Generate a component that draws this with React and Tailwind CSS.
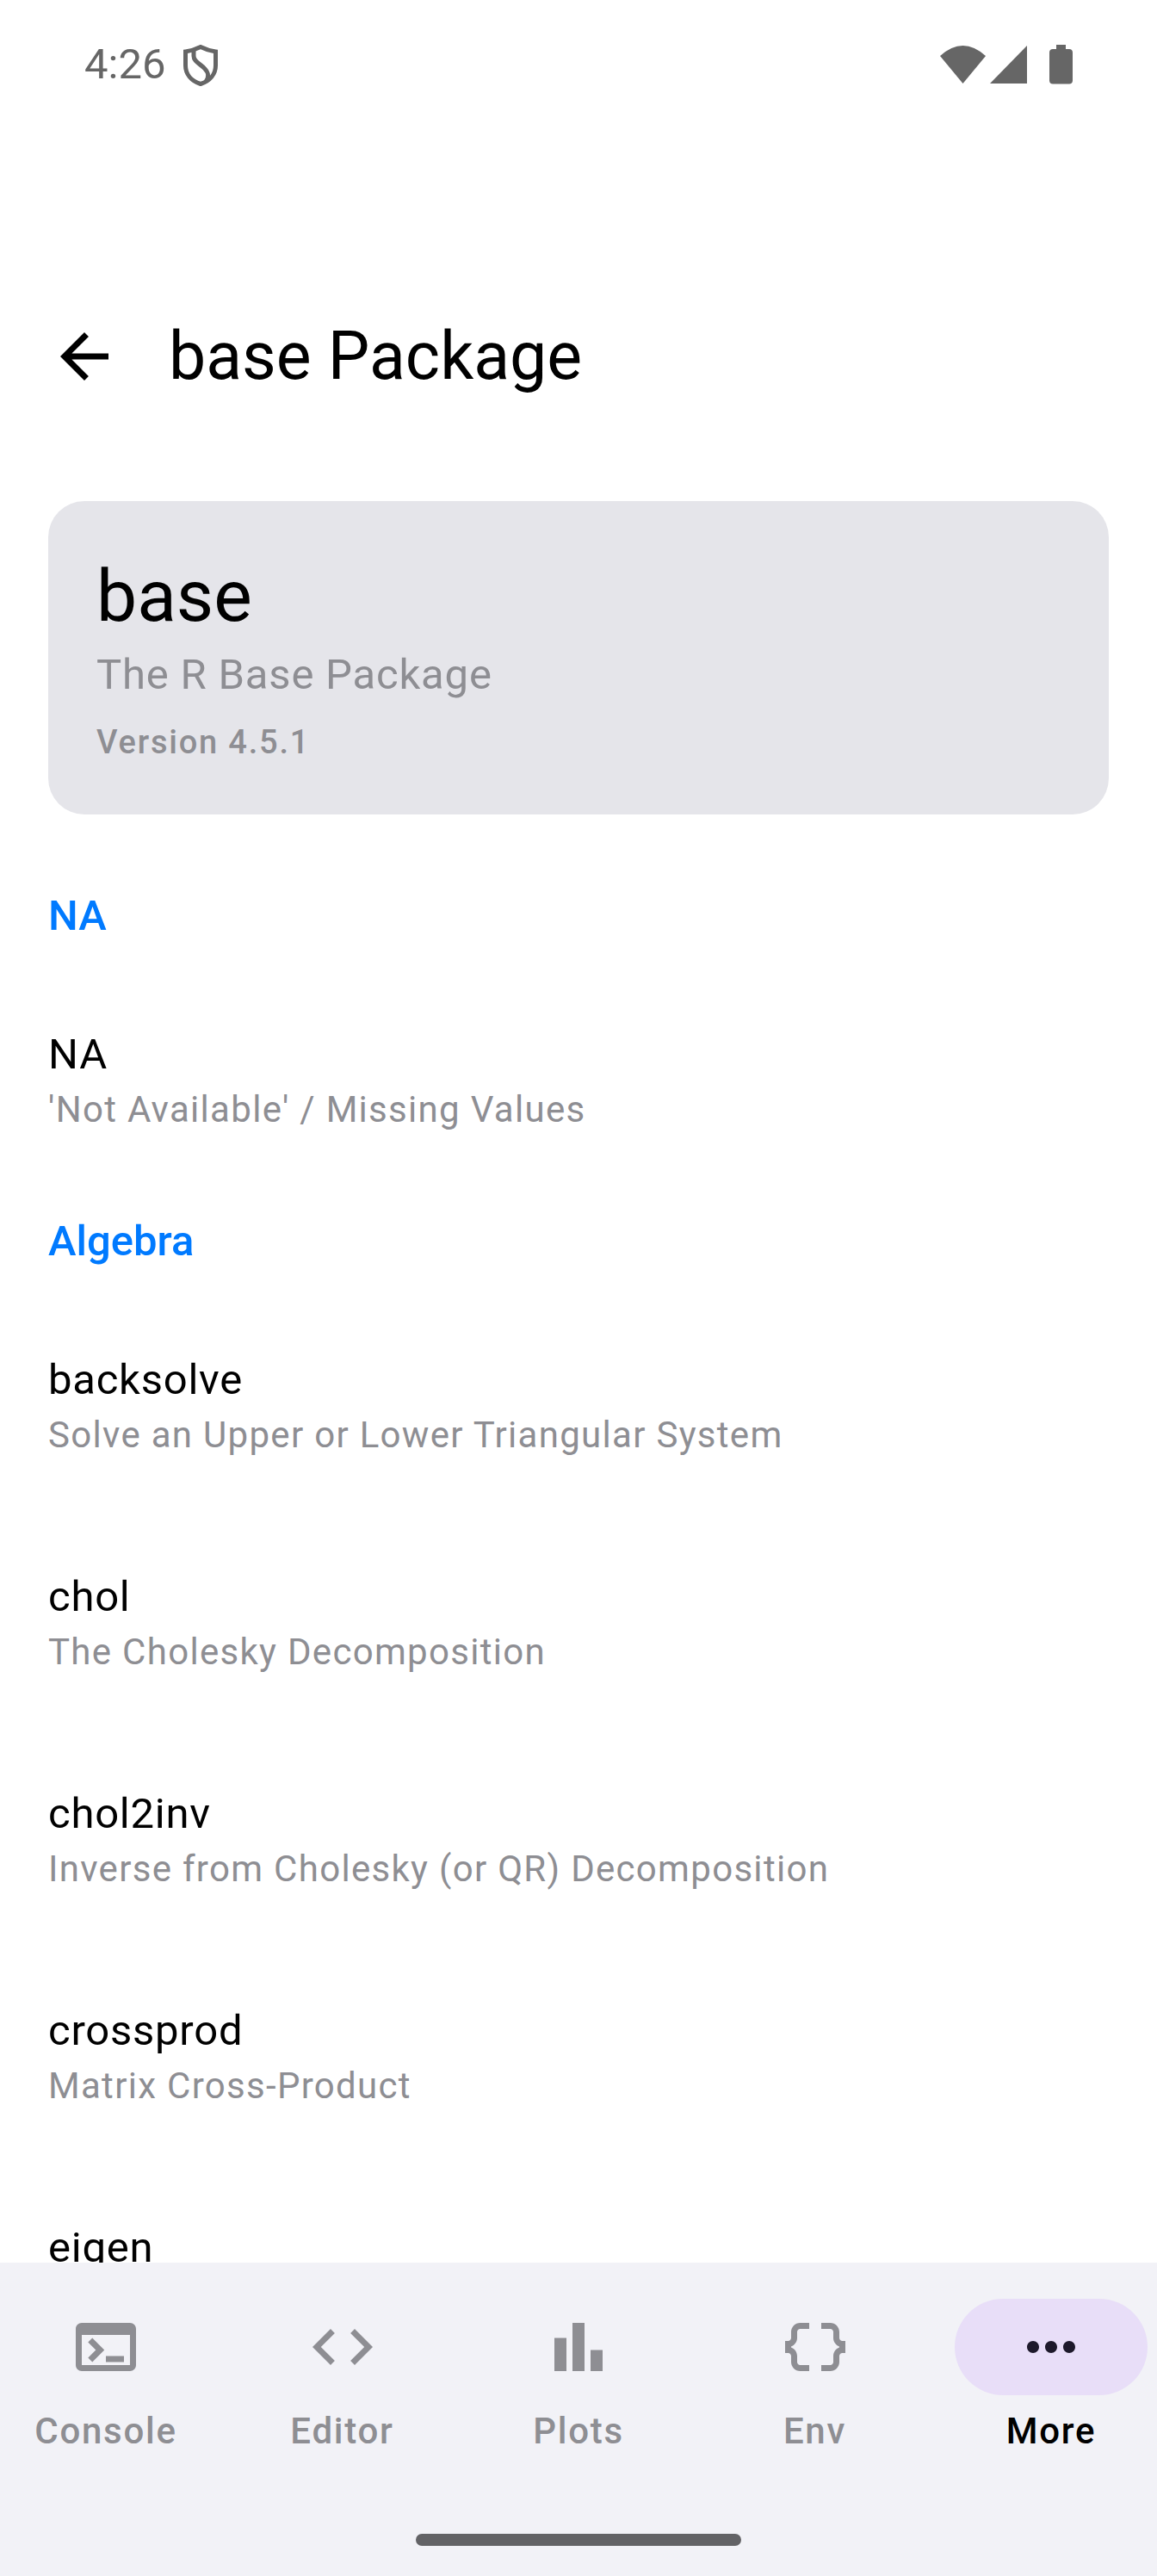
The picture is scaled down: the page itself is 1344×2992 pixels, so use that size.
const rows = [
  { type: "section", label: "NA" },
  { name: "NA", desc: "'Not Available' / Missing Values" },
  { type: "section", label: "Algebra" },
  { name: "backsolve", desc: "Solve an Upper or Lower Triangular System" },
  { name: "chol", desc: "The Cholesky Decomposition" },
  { name: "chol2inv", desc: "Inverse from Cholesky (or QR) Decomposition" },
  { name: "crossprod", desc: "Matrix Cross-Product" },
  { name: "eigen" },
];

const tabs = [
  {
    label: "Console",
    path: "M20,4H4C2.89,4,2,4.9,2,6v12c0,1.1,0.89,2,2,2h16c1.1,0,2-0.9,2-2V6C22,4.9,21.11,4,20,4z M20,18H4V8h16V18z M18,17h-6v-2h6V17z M7.5,17l-1.41-1.41L8.67,13l-2.59-2.59L7.5,9l4,4L7.5,17z",
  },
  {
    label: "Editor",
    path: "M9.4 16.6L4.8 12l4.6-4.6L8 6l-6 6 6 6 1.4-1.4zm5.2 0l4.6-4.6-4.6-4.6L16 6l6 6-6 6-1.4-1.4z",
  },
  { label: "Plots", path: "M4 9h4v11H4z M10 4h4v16h-4z M16 13h4v7h-4z" },
  {
    label: "Env",
    path: "M4,7v2c0,0.55-0.45,1-1,1H2v4h1c0.55,0,1,0.45,1,1v2c0,1.65,1.35,3,3,3h3v-2H7c-0.55,0-1-0.45-1-1v-2c0-1.3-0.84-2.42-2-2.83v-0.34C5.16,11.42,6,10.3,6,9V7c0-0.55,0.45-1,1-1h3V4H7C5.35,4,4,5.35,4,7z M21,10c-0.55,0-1-0.45-1-1V7c0-1.65-1.35-3-3-3h-3v2h3c0.55,0,1,0.45,1,1v2c0,1.3,0.84,2.42,2,2.83v0.34c-1.16,0.41-2,1.52-2,2.83v2c0,0.55-0.45,1-1,1h-3v2h3c1.65,0,3-1.35,3-3v-2c0-0.55,0.45-1,1-1h1v-4H21z",
  },
  {
    label: "More",
    active: true,
    path: "M6 10c-1.1 0-2 .9-2 2s.9 2 2 2 2-.9 2-2-.9-2-2-2zm12 0c-1.1 0-2 .9-2 2s.9 2 2 2 2-.9 2-2-.9-2-2-2zm-6 0c-1.1 0-2 .9-2 2s.9 2 2 2 2-.9 2-2-.9-2-2-2z",
  },
];

function StatusBar() {
  return (
    <div className="h-[150px] shrink-0 flex items-center justify-between pl-[98px] pr-[98px] text-[#666666]">
      <div className="flex items-center gap-[21px]">
        <span className="text-[49px] leading-[50px]">4:26</span>
        <svg width="40" height="48" viewBox="0 0 40 48" fill="none" stroke="currentColor" strokeWidth="5" className="mt-[2px]">
          <path d="M20 2.5 C25 5 31 7 37.5 8 V24 C37.5 34 31 42 20 45.5 C9 42 2.5 34 2.5 24 V8 C9 7 15 5 20 2.5 Z" />
          <path d="M12 6 V13 C12 20 20 22 25 28 C29 32 30 38 26 43" />
        </svg>
      </div>
      <svg width="154" height="46" viewBox="0 0 154 46" fill="currentColor">
        <path d="M0 13 Q26.5 -11 53 13 L26.5 45 Z" />
        <path d="M58 45 L101 1 V45 Z" />
        <path d="M135 0 H146 V5 H150 C152.5 5 154 6.5 154 9 V41.5 C154 44 152.5 45.5 150 45.5 H131 C128.5 45.5 127 44 127 41.5 V9 C127 6.5 128.5 5 131 5 H135 Z" />
      </svg>
    </div>
  );
}

function TabItem({ tab }) {
  return (
    <div className="w-[224px] flex flex-col items-center">
      <div className={`w-[224px] h-[112px] rounded-full flex items-center justify-center ${tab.active ? "bg-[#e8def8]" : ""}`}>
        <svg width="84" height="84" viewBox="0 0 24 24" fill={tab.active ? "#1d192b" : "#8e8e93"}>
          <path d={tab.path} />
        </svg>
      </div>
      <span className={`mt-[14px] text-[42px] leading-[56px] font-medium tracking-[1.75px] ${tab.active ? "text-black" : "text-[#8e8e93]"}`}>
        {tab.label}
      </span>
    </div>
  );
}

export default function App() {
  return (
    <div className="w-[1344px] h-[2992px] bg-white flex flex-col overflow-hidden font-['Roboto',sans-serif]">
      <StatusBar />

      {/* top app bar */}
      <div className="h-[196px] mt-[166px] mb-[70px] shrink-0 flex items-center pl-[56px]">
        <svg width="84" height="84" viewBox="0 0 24 24" fill="#000">
          <path d="M20 11H7.83l5.59-5.59L12 4l-8 8 8 8 1.41-1.41L7.83 13H20v-2z" />
        </svg>
        <h1 className="ml-[56px] text-[77px] leading-[100px] font-normal text-black">base Package</h1>
      </div>

      <div className="flex-1 min-h-0 overflow-hidden px-[56px]">
        <div className="h-[364px] rounded-[42px] bg-[#e5e5ea] px-[56px] pt-[62px]">
          <div className="text-[84px] leading-[98px] text-black">base</div>
          <div className="mt-[7px] text-[49px] leading-[70px] tracking-[0.8px] text-[#8e8e93]">The R Base Package</div>
          <div className="mt-[15px] text-[38px] leading-[56px] font-medium tracking-[1.8px] text-[#8e8e93]">Version 4.5.1</div>
        </div>

        <div className="mt-[85px]">
          {rows.map((row, i) =>
            row.type === "section" ? (
              <div key={i} className="h-[126px] text-[49px] leading-[66px] font-medium text-[#007aff]">
                {row.label}
              </div>
            ) : (
              <div key={i} className="h-[252px] pt-[35px]">
                <div className="text-[49px] leading-[66px] tracking-[0.75px] text-black">{row.name}</div>
                {row.desc && (
                  <div className="mt-[3px] text-[42px] leading-[56px] tracking-[1.3px] text-[#8e8e93]">{row.desc}</div>
                )}
              </div>
            )
          )}
        </div>
      </div>

      <div className="h-[364px] shrink-0 bg-[#f2f2f7] flex flex-col">
        <div className="flex justify-between px-[11px] pt-[42px]">
          {tabs.map((t) => (
            <TabItem key={t.label} tab={t} />
          ))}
        </div>
        <div className="mt-auto mb-[35px] mx-auto w-[378px] h-[14px] rounded-full bg-[#636366]" />
      </div>
    </div>
  );
}
